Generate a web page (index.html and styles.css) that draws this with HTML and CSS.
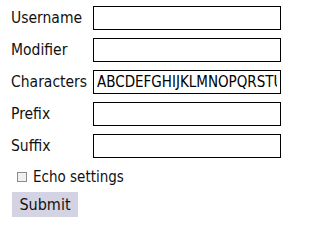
FILE: index.html
```html
<!DOCTYPE html>
<html>
<head>
<meta charset="utf-8">
<link rel="stylesheet" href="styles.css">
</head>
<body>
<form class="form">
  <div class="fields">
    <label class="label">Username</label><input class="field" type="text">
    <label class="label">Modifier</label><input class="field" type="text">
    <label class="label">Characters</label><input class="field" type="text" value="ABCDEFGHIJKLMNOPQRSTUVWXYZ">
    <label class="label">Prefix</label><input class="field" type="text">
    <label class="label">Suffix</label><input class="field" type="text">
  </div>
  <div class="echo"><span class="check"></span><span class="echo-text">Echo settings</span></div>
  <button class="submit" type="button">Submit</button>
</form>
</body>
</html>
```

FILE: styles.css
```css
html, body {
  margin: 0;
  padding: 0;
  background: #ffffff;
}
body {
  font-family: "DejaVu Sans Condensed", "DejaVu Sans", sans-serif;
  font-size: 15px;
  color: #111111;
}
.form {
  padding: 6px 0 0 11px;
}
.fields {
  display: grid;
  grid-template-columns: 82px 188px;
  grid-auto-rows: 24px;
  row-gap: 8px;
  align-items: center;
}
.label {
  line-height: 24px;
  font-size: 15.5px;
}
.field {
  box-sizing: border-box;
  width: 188px;
  height: 24px;
  margin: 0;
  border: 1px solid #000000;
  padding: 0 3px;
  font: inherit;
  font-size: 15px;
  color: #000000;
  background: #ffffff;
  outline: none;
}
.echo {
  display: flex;
  align-items: center;
  margin: 9px 0 0 6px;
  height: 20px;
}
.check {
  box-sizing: border-box;
  width: 10px;
  height: 10px;
  border: 1px solid #8c8c8c;
  background: #f0f0f0;
  margin-right: 6px;
}
.submit {
  display: block;
  margin: 5px 0 0 1px;
  box-sizing: border-box;
  width: 66px;
  height: 25px;
  border: none;
  padding: 0;
  background: #d3d3e3;
  font: inherit;
  font-size: 16px;
  color: #111111;
}
```
